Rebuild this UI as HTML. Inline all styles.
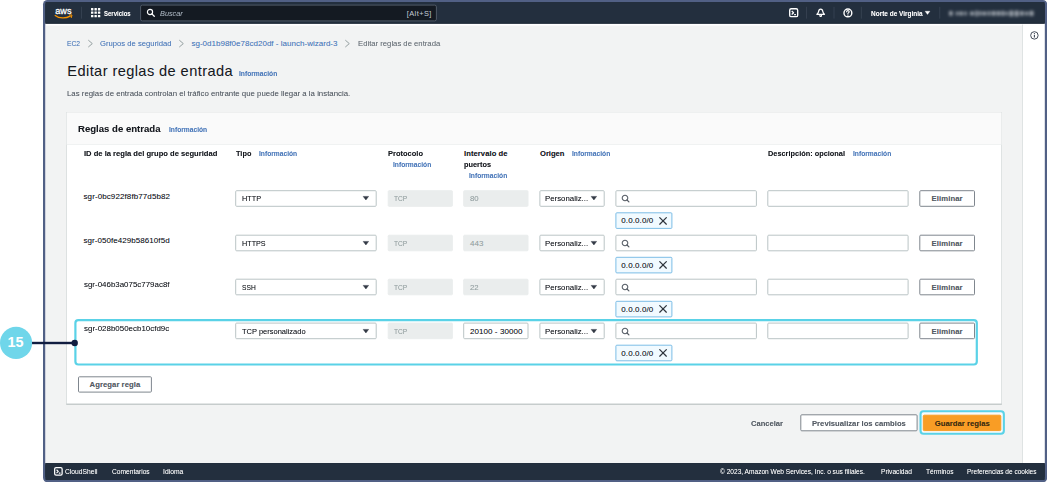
<!DOCTYPE html>
<html lang="es">
<head>
<meta charset="utf-8">
<title>Editar reglas de entrada</title>
<style>
html,body{margin:0;padding:0;background:#fff;}
body{width:1047px;height:482px;position:relative;overflow:hidden;font-family:"Liberation Sans",sans-serif;}
.t{position:absolute;white-space:nowrap;display:block;margin:0;padding:0;font-weight:400;text-decoration:none;}
svg{position:absolute;overflow:visible;}
</style>
</head>
<body>
<svg id="shapes" style="left:0;top:0" width="1047" height="482" viewBox="0 0 1047 482">
<rect x="43.00" y="0.00" width="1004.30" height="482.20" rx="4.5" fill="#516085" />
<rect x="45.30" y="22.00" width="999.50" height="443.00" rx="0" fill="#ffffff" />
<rect x="45.25" y="2.00" width="999.60" height="21.50" rx="1" fill="#232f3e" />
<rect x="45.30" y="4.00" width="999.50" height="19.50" rx="0" fill="#232f3e" />
<rect x="45.30" y="22.90" width="999.50" height="0.60" rx="0" fill="#141f2d" />
<rect x="45.90" y="25.60" width="976.50" height="437.50" rx="0" fill="#f2f3f3" />
<rect x="1022.20" y="24.50" width="0.80" height="438.60" rx="0" fill="#d9dede" />
<rect x="45.25" y="463.10" width="999.60" height="16.90" rx="1" fill="#232f3e" />
<rect x="45.30" y="463.10" width="999.50" height="13.90" rx="0" fill="#232f3e" />
<rect x="140.60" y="5.10" width="295.80" height="15.80" rx="1.75" fill="#141a22" stroke="#505a67" stroke-width="1" />
<rect x="81.20" y="6.80" width="0.80" height="11.80" rx="0" fill="#394555" />
<rect x="806.10" y="6.80" width="0.80" height="11.80" rx="0" fill="#394555" />
<rect x="833.60" y="6.80" width="0.80" height="11.80" rx="0" fill="#394555" />
<rect x="860.90" y="6.80" width="0.80" height="11.80" rx="0" fill="#394555" />
<rect x="939.40" y="6.80" width="0.80" height="11.80" rx="0" fill="#394555" />
<rect x="66.20" y="112.30" width="935.70" height="292.60" rx="0.5" fill="#c6cccc" />
<rect x="66.70" y="112.50" width="934.70" height="291.00" rx="0" fill="#ffffff" />
<rect x="66.70" y="112.70" width="934.70" height="32.00" rx="0" fill="#fafafa" />
<rect x="66.70" y="144.30" width="934.70" height="0.60" rx="0" fill="#eaeded" />
<rect x="235.70" y="190.70" width="140.50" height="15.60" rx="0.95" fill="#ffffff" stroke="#bac4c5" stroke-width="1" />
<rect x="388.20" y="190.70" width="64.20" height="15.60" rx="0.95" fill="#eaeded" stroke="#eaeded" stroke-width="1" />
<rect x="463.70" y="190.70" width="64.30" height="15.60" rx="0.95" fill="#eaeded" stroke="#eaeded" stroke-width="1" />
<rect x="539.90" y="190.70" width="64.30" height="15.60" rx="0.95" fill="#ffffff" stroke="#bac4c5" stroke-width="1" />
<rect x="615.90" y="190.70" width="140.50" height="15.60" rx="0.95" fill="#ffffff" stroke="#bac4c5" stroke-width="1" />
<rect x="767.80" y="190.70" width="140.30" height="15.60" rx="0.95" fill="#ffffff" stroke="#bac4c5" stroke-width="1" />
<rect x="919.80" y="190.70" width="54.70" height="15.60" rx="0.95" fill="#ffffff" stroke="#7f868e" stroke-width="1" />
<rect x="615.90" y="212.80" width="56.00" height="15.60" rx="0.95" fill="#f1faff" stroke="#7cbde6" stroke-width="1" />
<rect x="235.70" y="235.20" width="140.50" height="15.60" rx="0.95" fill="#ffffff" stroke="#bac4c5" stroke-width="1" />
<rect x="388.20" y="235.20" width="64.20" height="15.60" rx="0.95" fill="#eaeded" stroke="#eaeded" stroke-width="1" />
<rect x="463.70" y="235.20" width="64.30" height="15.60" rx="0.95" fill="#eaeded" stroke="#eaeded" stroke-width="1" />
<rect x="539.90" y="235.20" width="64.30" height="15.60" rx="0.95" fill="#ffffff" stroke="#bac4c5" stroke-width="1" />
<rect x="615.90" y="235.20" width="140.50" height="15.60" rx="0.95" fill="#ffffff" stroke="#bac4c5" stroke-width="1" />
<rect x="767.80" y="235.20" width="140.30" height="15.60" rx="0.95" fill="#ffffff" stroke="#bac4c5" stroke-width="1" />
<rect x="919.80" y="235.20" width="54.70" height="15.60" rx="0.95" fill="#ffffff" stroke="#7f868e" stroke-width="1" />
<rect x="615.90" y="257.30" width="56.00" height="15.60" rx="0.95" fill="#f1faff" stroke="#7cbde6" stroke-width="1" />
<rect x="235.70" y="279.20" width="140.50" height="15.60" rx="0.95" fill="#ffffff" stroke="#bac4c5" stroke-width="1" />
<rect x="388.20" y="279.20" width="64.20" height="15.60" rx="0.95" fill="#eaeded" stroke="#eaeded" stroke-width="1" />
<rect x="463.70" y="279.20" width="64.30" height="15.60" rx="0.95" fill="#eaeded" stroke="#eaeded" stroke-width="1" />
<rect x="539.90" y="279.20" width="64.30" height="15.60" rx="0.95" fill="#ffffff" stroke="#bac4c5" stroke-width="1" />
<rect x="615.90" y="279.20" width="140.50" height="15.60" rx="0.95" fill="#ffffff" stroke="#bac4c5" stroke-width="1" />
<rect x="767.80" y="279.20" width="140.30" height="15.60" rx="0.95" fill="#ffffff" stroke="#bac4c5" stroke-width="1" />
<rect x="919.80" y="279.20" width="54.70" height="15.60" rx="0.95" fill="#ffffff" stroke="#7f868e" stroke-width="1" />
<rect x="615.90" y="301.30" width="56.00" height="15.60" rx="0.95" fill="#f1faff" stroke="#7cbde6" stroke-width="1" />
<rect x="235.70" y="323.10" width="140.50" height="15.60" rx="0.95" fill="#ffffff" stroke="#bac4c5" stroke-width="1" />
<rect x="388.20" y="323.10" width="64.20" height="15.60" rx="0.95" fill="#eaeded" stroke="#eaeded" stroke-width="1" />
<rect x="463.70" y="323.10" width="64.30" height="15.60" rx="0.95" fill="#ffffff" stroke="#bac4c5" stroke-width="1" />
<rect x="539.90" y="323.10" width="64.30" height="15.60" rx="0.95" fill="#ffffff" stroke="#bac4c5" stroke-width="1" />
<rect x="615.90" y="323.10" width="140.50" height="15.60" rx="0.95" fill="#ffffff" stroke="#bac4c5" stroke-width="1" />
<rect x="767.80" y="323.10" width="140.30" height="15.60" rx="0.95" fill="#ffffff" stroke="#bac4c5" stroke-width="1" />
<rect x="919.80" y="323.10" width="54.70" height="15.60" rx="0.95" fill="#ffffff" stroke="#7f868e" stroke-width="1" />
<rect x="615.90" y="345.20" width="56.00" height="15.60" rx="0.95" fill="#f1faff" stroke="#7cbde6" stroke-width="1" />
<rect x="78.50" y="376.80" width="72.90" height="15.30" rx="0.95" fill="#ffffff" stroke="#7f868e" stroke-width="1" />
<rect x="800.80" y="414.80" width="116.30" height="16.00" rx="0.95" fill="#ffffff" stroke="#7f868e" stroke-width="1" />
<rect x="920.55" y="411.25" width="83.30" height="22.50" rx="2.975" fill="#fafbfb" stroke="#5ad2e7" stroke-width="2.1" />
<rect x="923.30" y="415.20" width="77.50" height="15.40" rx="0.95" fill="#f99d25" stroke="#f99d25" stroke-width="1" />
<rect x="75.40" y="320.10" width="901.40" height="44.40" rx="2.95" fill="none" stroke="#5ad2e7" stroke-width="2.2" />
<rect x="32.00" y="341.80" width="43.00" height="2.40" rx="0" fill="#111d40" />
<circle cx="74.7" cy="343" r="3.2" fill="#111d40"/><circle cx="16.05" cy="342.9" r="16.05" fill="#6fd6ea"/>
</svg>
<svg style="left:363.10px;top:196.45px" width="5.80" height="4.30" viewBox="0 0 6 4.2"><path d="M0.2 0.3H5.8L3 4z" fill="#323944" stroke="#323944" stroke-width="0.5" stroke-linejoin="round"/></svg>
<svg style="left:591.00px;top:196.45px" width="5.80" height="4.30" viewBox="0 0 6 4.2"><path d="M0.2 0.3H5.8L3 4z" fill="#323944" stroke="#323944" stroke-width="0.5" stroke-linejoin="round"/></svg>
<svg style="left:620.70px;top:194.10px" width="10.00" height="10.00" viewBox="0 0 10 10"><circle cx="4" cy="4" r="2.8" fill="none" stroke="#545b64" stroke-width="1.05"/><path d="M6.016 6.016L7.916 7.916" stroke="#545b64" stroke-width="1.2075" stroke-linecap="round"/></svg>
<svg style="left:659.10px;top:216.70px" width="8.10" height="7.80" viewBox="0 0 8 8"><path d="M0.6 0.6L7.4 7.4M7.4 0.6L0.6 7.4" stroke="#2f353d" stroke-width="1.25" stroke-linecap="round"/></svg>
<svg style="left:363.10px;top:240.95px" width="5.80" height="4.30" viewBox="0 0 6 4.2"><path d="M0.2 0.3H5.8L3 4z" fill="#323944" stroke="#323944" stroke-width="0.5" stroke-linejoin="round"/></svg>
<svg style="left:591.00px;top:240.95px" width="5.80" height="4.30" viewBox="0 0 6 4.2"><path d="M0.2 0.3H5.8L3 4z" fill="#323944" stroke="#323944" stroke-width="0.5" stroke-linejoin="round"/></svg>
<svg style="left:620.70px;top:238.60px" width="10.00" height="10.00" viewBox="0 0 10 10"><circle cx="4" cy="4" r="2.8" fill="none" stroke="#545b64" stroke-width="1.05"/><path d="M6.016 6.016L7.916 7.916" stroke="#545b64" stroke-width="1.2075" stroke-linecap="round"/></svg>
<svg style="left:659.10px;top:261.20px" width="8.10" height="7.80" viewBox="0 0 8 8"><path d="M0.6 0.6L7.4 7.4M7.4 0.6L0.6 7.4" stroke="#2f353d" stroke-width="1.25" stroke-linecap="round"/></svg>
<svg style="left:363.10px;top:284.95px" width="5.80" height="4.30" viewBox="0 0 6 4.2"><path d="M0.2 0.3H5.8L3 4z" fill="#323944" stroke="#323944" stroke-width="0.5" stroke-linejoin="round"/></svg>
<svg style="left:591.00px;top:284.95px" width="5.80" height="4.30" viewBox="0 0 6 4.2"><path d="M0.2 0.3H5.8L3 4z" fill="#323944" stroke="#323944" stroke-width="0.5" stroke-linejoin="round"/></svg>
<svg style="left:620.70px;top:282.60px" width="10.00" height="10.00" viewBox="0 0 10 10"><circle cx="4" cy="4" r="2.8" fill="none" stroke="#545b64" stroke-width="1.05"/><path d="M6.016 6.016L7.916 7.916" stroke="#545b64" stroke-width="1.2075" stroke-linecap="round"/></svg>
<svg style="left:659.10px;top:305.20px" width="8.10" height="7.80" viewBox="0 0 8 8"><path d="M0.6 0.6L7.4 7.4M7.4 0.6L0.6 7.4" stroke="#2f353d" stroke-width="1.25" stroke-linecap="round"/></svg>
<svg style="left:363.10px;top:328.85px" width="5.80" height="4.30" viewBox="0 0 6 4.2"><path d="M0.2 0.3H5.8L3 4z" fill="#323944" stroke="#323944" stroke-width="0.5" stroke-linejoin="round"/></svg>
<svg style="left:591.00px;top:328.85px" width="5.80" height="4.30" viewBox="0 0 6 4.2"><path d="M0.2 0.3H5.8L3 4z" fill="#323944" stroke="#323944" stroke-width="0.5" stroke-linejoin="round"/></svg>
<svg style="left:620.70px;top:326.50px" width="10.00" height="10.00" viewBox="0 0 10 10"><circle cx="4" cy="4" r="2.8" fill="none" stroke="#545b64" stroke-width="1.05"/><path d="M6.016 6.016L7.916 7.916" stroke="#545b64" stroke-width="1.2075" stroke-linecap="round"/></svg>
<svg style="left:659.10px;top:349.10px" width="8.10" height="7.80" viewBox="0 0 8 8"><path d="M0.6 0.6L7.4 7.4M7.4 0.6L0.6 7.4" stroke="#2f353d" stroke-width="1.25" stroke-linecap="round"/></svg>
<svg style="left:947px;top:0.9px;filter:blur(1.6px);opacity:.62" width="90" height="20" viewBox="0 0 90 20"><rect x="2.0" y="10.1" width="3.8" height="4.6" rx="1" fill="#dfe3e8"/><rect x="8.8" y="10.4" width="2.6" height="4.0" rx="1" fill="#dfe3e8"/><rect x="12.3" y="10.4" width="3.8" height="4.0" rx="1" fill="#dfe3e8"/><rect x="17.3" y="10.4" width="2.6" height="4.0" rx="1" fill="#dfe3e8"/><rect x="22.9" y="10.4" width="4.2" height="4.0" rx="1" fill="#dfe3e8"/><rect x="28.3" y="9.4" width="2.6" height="6.0" rx="1" fill="#dfe3e8"/><rect x="31.8" y="10.1" width="2.6" height="4.6" rx="1" fill="#dfe3e8"/><rect x="35.3" y="10.4" width="4.2" height="4.0" rx="1" fill="#dfe3e8"/><rect x="40.7" y="10.1" width="2.6" height="4.6" rx="1" fill="#dfe3e8"/><rect x="44.5" y="10.1" width="4.2" height="4.6" rx="1" fill="#dfe3e8"/><rect x="49.6" y="10.1" width="3.8" height="4.6" rx="1" fill="#dfe3e8"/><rect x="54.3" y="9.8" width="3.2" height="5.2" rx="1" fill="#dfe3e8"/><rect x="58.4" y="10.4" width="2.6" height="4.0" rx="1" fill="#dfe3e8"/><rect x="62.2" y="9.4" width="4.2" height="6.0" rx="1" fill="#dfe3e8"/><rect x="67.6" y="9.4" width="4.2" height="6.0" rx="1" fill="#dfe3e8"/><rect x="73.0" y="10.1" width="3.8" height="4.6" rx="1" fill="#dfe3e8"/><rect x="78.0" y="10.4" width="3.2" height="4.0" rx="1" fill="#dfe3e8"/><rect x="82.4" y="9.8" width="4.2" height="5.2" rx="1" fill="#dfe3e8"/></svg>
<svg style="left:54px;top:5px" width="20" height="15" viewBox="0 0 20 15"><text x="1.3" y="8.5" font-family="Liberation Sans, sans-serif" font-weight="400" font-size="9.9" fill="#ffffff" stroke="#ffffff" stroke-width="0.3" textLength="16.2" lengthAdjust="spacingAndGlyphs">aws</text><path d="M1.2 10.4C5.2 13.6 11.6 13.7 16.3 11.1" fill="none" stroke="#f79400" stroke-width="1.25" stroke-linecap="round"/><path d="M15.3 9.9L18 10L17.3 12.6" fill="none" stroke="#f79400" stroke-width="1" stroke-linejoin="round" stroke-linecap="round"/></svg>
<svg style="left:90.80px;top:8.40px" width="9.30" height="9.30" viewBox="0 0 9.3 9.3"><rect x="0" y="0" width="2.4" height="2.4" rx="0.3" fill="#ffffff"/><rect x="3.45" y="0" width="2.4" height="2.4" rx="0.3" fill="#ffffff"/><rect x="6.9" y="0" width="2.4" height="2.4" rx="0.3" fill="#ffffff"/><rect x="0" y="3.45" width="2.4" height="2.4" rx="0.3" fill="#ffffff"/><rect x="3.45" y="3.45" width="2.4" height="2.4" rx="0.3" fill="#ffffff"/><rect x="6.9" y="3.45" width="2.4" height="2.4" rx="0.3" fill="#ffffff"/><rect x="0" y="6.9" width="2.4" height="2.4" rx="0.3" fill="#ffffff"/><rect x="3.45" y="6.9" width="2.4" height="2.4" rx="0.3" fill="#ffffff"/><rect x="6.9" y="6.9" width="2.4" height="2.4" rx="0.3" fill="#ffffff"/></svg>
<svg style="left:145.90px;top:8.10px" width="10.00" height="10.00" viewBox="0 0 10 10"><circle cx="4" cy="4" r="2.6" fill="none" stroke="#ffffff" stroke-width="1.15"/><path d="M5.872 5.872L8.272 8.272" stroke="#ffffff" stroke-width="1.3225" stroke-linecap="round"/></svg>
<svg style="left:788.60px;top:8.10px" width="9.40" height="9.40" viewBox="0 0 16 16"><rect x="1.2" y="1.2" width="13.6" height="13.6" rx="2.6" fill="none" stroke="#ffffff" stroke-width="2.3"/><path d="M4.6 5L7.8 8L4.6 11M8.8 11.2H11.8" fill="none" stroke="#ffffff" stroke-width="2.1" stroke-linejoin="round"/></svg>
<svg style="left:816.00px;top:8.20px" width="9.40" height="9.40" viewBox="0 0 16 16"><path d="M8 1.9C5.6 1.9 4.7 3.8 4.4 6C4.1 8 3.2 9.5 1.6 10.7H14.4C12.8 9.5 11.9 8 11.6 6C11.3 3.8 10.4 1.9 8 1.9Z" fill="none" stroke="#fff" stroke-width="2.2" stroke-linejoin="round"/><circle cx="8" cy="13" r="1.5" fill="none" stroke="#fff" stroke-width="1.8"/></svg>
<svg style="left:842.90px;top:8.00px" width="9.80" height="9.80" viewBox="0 0 16 16"><circle cx="8" cy="8" r="6.4" fill="none" stroke="#fff" stroke-width="2.3"/><path d="M5.9 6.3C5.9 5.1 6.8 4.4 8 4.4C9.2 4.4 10.1 5.1 10.1 6.2C10.1 7.5 8 7.6 8 9.3" fill="none" stroke="#fff" stroke-width="1.9" stroke-linecap="round"/><circle cx="8" cy="11.6" r="1.15" fill="#fff"/></svg>
<svg style="left:925.20px;top:11.20px" width="5.00" height="3.60" viewBox="0 0 6 4.2"><path d="M0.2 0.3H5.8L3 4z" fill="#ffffff" stroke="#ffffff" stroke-width="0.5" stroke-linejoin="round"/></svg>
<svg style="left:1029.60px;top:31.00px" width="8.80" height="8.80" viewBox="0 0 16 16"><circle cx="8" cy="8" r="6.8" fill="none" stroke="#3a4250" stroke-width="1.7"/><path d="M8 7.2V11.6" stroke="#3a4250" stroke-width="2"/><circle cx="8" cy="4.8" r="1.1" fill="#3a4250"/></svg>
<svg style="left:87.70px;top:40.10px" width="5.00" height="7.20" viewBox="0 0 5 7.2"><path d="M0.6 0.4L4.3 3.6L0.6 6.8" fill="none" stroke="#8a9697" stroke-width="0.9" stroke-linejoin="round" stroke-linecap="round"/></svg>
<svg style="left:179.10px;top:40.10px" width="5.00" height="7.20" viewBox="0 0 5 7.2"><path d="M0.6 0.4L4.3 3.6L0.6 6.8" fill="none" stroke="#8a9697" stroke-width="0.9" stroke-linejoin="round" stroke-linecap="round"/></svg>
<svg style="left:345.20px;top:40.10px" width="5.00" height="7.20" viewBox="0 0 5 7.2"><path d="M0.6 0.4L4.3 3.6L0.6 6.8" fill="none" stroke="#8a9697" stroke-width="0.9" stroke-linejoin="round" stroke-linecap="round"/></svg>
<svg style="left:53.80px;top:467.20px" width="8.80" height="8.80" viewBox="0 0 16 16"><rect x="1.2" y="1.2" width="13.6" height="13.6" rx="2.6" fill="none" stroke="#ffffff" stroke-width="2.3"/><path d="M4.6 5L7.8 8L4.6 11M8.8 11.2H11.8" fill="none" stroke="#ffffff" stroke-width="2.1" stroke-linejoin="round"/></svg>
<span class="t" style="left:104.40px;top:8.00px;font-size:7.2px;line-height:11px;color:#ffffff;text-shadow:0 0 0.5px rgba(255,255,255,0.35);font-weight:700;transform:scaleX(0.8352);transform-origin:0 50%;">Servicios</span>
<span class="t" style="left:159.90px;top:8.00px;font-size:7.4px;line-height:11px;color:#a3adb8;text-shadow:0 0 0.5px rgba(163,173,184,0.35);font-style:italic;transform:scaleX(0.9906);transform-origin:0 50%;">Buscar</span>
<span class="t" style="left:406.80px;top:8.00px;font-size:7.4px;line-height:11px;color:#b6bec6;letter-spacing:0.419px;text-shadow:0 0 0.5px rgba(182,190,198,0.35);">[Alt+S]</span>
<span class="t" style="left:870.80px;top:8.00px;font-size:7.2px;line-height:11px;color:#ffffff;text-shadow:0 0 0.5px rgba(255,255,255,0.35);font-weight:700;transform:scaleX(0.9008);transform-origin:0 50%;">Norte de Virginia</span>
<a class="t" style="left:66.90px;top:38.00px;font-size:8px;line-height:12px;color:#4c7abb;text-shadow:0 0 0.5px rgba(76,122,187,0.35);transform:scaleX(0.8418);transform-origin:0 50%;">EC2</a>
<a class="t" style="left:100.10px;top:38.00px;font-size:8px;line-height:12px;color:#4c7abb;text-shadow:0 0 0.5px rgba(76,122,187,0.35);transform:scaleX(0.9583);transform-origin:0 50%;">Grupos de seguridad</a>
<a class="t" style="left:191.40px;top:38.00px;font-size:8px;line-height:12px;color:#4c7abb;letter-spacing:0.018px;text-shadow:0 0 0.5px rgba(76,122,187,0.35);">sg-0d1b98f0e78cd20df - launch-wizard-3</a>
<span class="t" style="left:357.90px;top:38.00px;font-size:8px;line-height:12px;color:#687078;text-shadow:0 0 0.5px rgba(104,112,120,0.35);transform:scaleX(0.9626);transform-origin:0 50%;">Editar reglas de entrada</span>
<h1 class="t" style="left:67.30px;top:61.00px;font-size:14.6px;line-height:20px;color:#16191f;letter-spacing:0.415px;text-shadow:0 0 0.5px rgba(22,25,31,0.14);">Editar reglas de entrada</h1>
<a class="t" style="left:238.70px;top:69.00px;font-size:6.9px;line-height:10px;color:#4c7abb;text-shadow:0 0 0.5px rgba(76,122,187,0.35);font-weight:700;transform:scaleX(0.9712);transform-origin:0 50%;">Información</a>
<p class="t" style="left:67.00px;top:88.00px;font-size:8px;line-height:12px;color:#545b64;text-shadow:0 0 0.5px rgba(84,91,100,0.35);transform:scaleX(0.9781);transform-origin:0 50%;">Las reglas de entrada controlan el tráfico entrante que puede llegar a la instancia.</p>
<h2 class="t" style="left:78.10px;top:122.00px;font-size:9.8px;line-height:14px;color:#16191f;text-shadow:0 0 0.5px rgba(22,25,31,0.35);font-weight:700;transform:scaleX(0.9774);transform-origin:0 50%;">Reglas de entrada</h2>
<a class="t" style="left:169.30px;top:125.00px;font-size:6.9px;line-height:10px;color:#4c7abb;text-shadow:0 0 0.5px rgba(76,122,187,0.35);font-weight:700;transform:scaleX(0.9686);transform-origin:0 50%;">Información</a>
<span class="t" style="left:83.60px;top:148.00px;font-size:7.6px;line-height:11px;color:#16191f;text-shadow:0 0 0.5px rgba(22,25,31,0.35);font-weight:700;transform:scaleX(0.9997);transform-origin:0 50%;">ID de la regla del grupo de seguridad</span>
<span class="t" style="left:235.80px;top:148.00px;font-size:7.6px;line-height:11px;color:#16191f;text-shadow:0 0 0.5px rgba(22,25,31,0.35);font-weight:700;transform:scaleX(0.9691);transform-origin:0 50%;">Tipo</span>
<a class="t" style="left:259.40px;top:149.00px;font-size:6.9px;line-height:10px;color:#4c7abb;text-shadow:0 0 0.5px rgba(76,122,187,0.35);font-weight:700;transform:scaleX(0.9686);transform-origin:0 50%;">Información</a>
<span class="t" style="left:388.00px;top:148.00px;font-size:7.6px;line-height:11px;color:#16191f;text-shadow:0 0 0.5px rgba(22,25,31,0.35);font-weight:700;transform:scaleX(0.9877);transform-origin:0 50%;">Protocolo</span>
<a class="t" style="left:393.00px;top:160.00px;font-size:6.9px;line-height:10px;color:#4c7abb;text-shadow:0 0 0.5px rgba(76,122,187,0.35);font-weight:700;transform:scaleX(0.9712);transform-origin:0 50%;">Información</a>
<span class="t" style="left:464.00px;top:148.00px;font-size:7.6px;line-height:11px;color:#16191f;letter-spacing:0.080px;text-shadow:0 0 0.5px rgba(22,25,31,0.35);font-weight:700;">Intervalo de</span>
<span class="t" style="left:464.00px;top:159.00px;font-size:7.6px;line-height:11px;color:#16191f;text-shadow:0 0 0.5px rgba(22,25,31,0.35);font-weight:700;transform:scaleX(0.9692);transform-origin:0 50%;">puertos</span>
<a class="t" style="left:469.00px;top:171.00px;font-size:6.9px;line-height:10px;color:#4c7abb;text-shadow:0 0 0.5px rgba(76,122,187,0.35);font-weight:700;transform:scaleX(0.9712);transform-origin:0 50%;">Información</a>
<span class="t" style="left:540.00px;top:148.00px;font-size:7.6px;line-height:11px;color:#16191f;letter-spacing:0.003px;text-shadow:0 0 0.5px rgba(22,25,31,0.35);font-weight:700;">Origen</span>
<a class="t" style="left:572.00px;top:149.00px;font-size:6.9px;line-height:10px;color:#4c7abb;text-shadow:0 0 0.5px rgba(76,122,187,0.35);font-weight:700;transform:scaleX(0.9712);transform-origin:0 50%;">Información</a>
<span class="t" style="left:768.00px;top:148.00px;font-size:7.6px;line-height:11px;color:#16191f;text-shadow:0 0 0.5px rgba(22,25,31,0.35);font-weight:700;transform:scaleX(0.9707);transform-origin:0 50%;">Descripción: opcional</span>
<a class="t" style="left:852.50px;top:149.00px;font-size:6.9px;line-height:10px;color:#4c7abb;text-shadow:0 0 0.5px rgba(76,122,187,0.35);font-weight:700;transform:scaleX(0.9712);transform-origin:0 50%;">Información</a>
<span class="t" style="left:83.50px;top:191.00px;font-size:8px;line-height:12px;color:#16191f;letter-spacing:0.099px;text-shadow:0 0 0.5px rgba(22,25,31,0.35);">sgr-0bc922f8fb77d5b82</span>
<span class="t" style="left:241.80px;top:193.00px;font-size:8px;line-height:12px;color:#16191f;text-shadow:0 0 0.5px rgba(22,25,31,0.35);transform:scaleX(0.9143);transform-origin:0 50%;">HTTP</span>
<span class="t" style="left:393.80px;top:193.00px;font-size:8px;line-height:12px;color:#95a1a2;text-shadow:0 0 0.5px rgba(149,161,162,0.35);transform:scaleX(0.8250);transform-origin:0 50%;">TCP</span>
<span class="t" style="left:469.90px;top:193.00px;font-size:8px;line-height:12px;color:#95a1a2;text-shadow:0 0 0.5px rgba(149,161,162,0.35);transform:scaleX(0.9768);transform-origin:0 50%;">80</span>
<span class="t" style="left:545.20px;top:193.00px;font-size:8px;line-height:12px;color:#16191f;text-shadow:0 0 0.5px rgba(22,25,31,0.35);transform:scaleX(0.9789);transform-origin:0 50%;">Personaliz...</span>
<span class="t" style="left:931.50px;top:193.00px;font-size:7.7px;line-height:11px;color:#545b64;letter-spacing:0.108px;text-shadow:0 0 0.5px rgba(84,91,100,0.35);font-weight:700;">Eliminar</span>
<span class="t" style="left:621.30px;top:215.00px;font-size:8px;line-height:12px;color:#16191f;letter-spacing:0.095px;text-shadow:0 0 0.5px rgba(22,25,31,0.35);">0.0.0.0/0</span>
<span class="t" style="left:83.50px;top:235.00px;font-size:8px;line-height:12px;color:#16191f;letter-spacing:0.057px;text-shadow:0 0 0.5px rgba(22,25,31,0.35);">sgr-050fe429b58610f5d</span>
<span class="t" style="left:241.80px;top:238.00px;font-size:8px;line-height:12px;color:#16191f;text-shadow:0 0 0.5px rgba(22,25,31,0.35);transform:scaleX(0.9034);transform-origin:0 50%;">HTTPS</span>
<span class="t" style="left:393.80px;top:238.00px;font-size:8px;line-height:12px;color:#95a1a2;text-shadow:0 0 0.5px rgba(149,161,162,0.35);transform:scaleX(0.8250);transform-origin:0 50%;">TCP</span>
<span class="t" style="left:469.90px;top:238.00px;font-size:8px;line-height:12px;color:#95a1a2;letter-spacing:0.120px;text-shadow:0 0 0.5px rgba(149,161,162,0.35);">443</span>
<span class="t" style="left:545.20px;top:238.00px;font-size:8px;line-height:12px;color:#16191f;text-shadow:0 0 0.5px rgba(22,25,31,0.35);transform:scaleX(0.9789);transform-origin:0 50%;">Personaliz...</span>
<span class="t" style="left:931.50px;top:238.00px;font-size:7.7px;line-height:11px;color:#545b64;letter-spacing:0.108px;text-shadow:0 0 0.5px rgba(84,91,100,0.35);font-weight:700;">Eliminar</span>
<span class="t" style="left:621.30px;top:260.00px;font-size:8px;line-height:12px;color:#16191f;letter-spacing:0.095px;text-shadow:0 0 0.5px rgba(22,25,31,0.35);">0.0.0.0/0</span>
<span class="t" style="left:83.50px;top:279.00px;font-size:8px;line-height:12px;color:#16191f;text-shadow:0 0 0.5px rgba(22,25,31,0.35);transform:scaleX(0.9908);transform-origin:0 50%;">sgr-046b3a075c779ac8f</span>
<span class="t" style="left:241.80px;top:282.00px;font-size:8px;line-height:12px;color:#16191f;text-shadow:0 0 0.5px rgba(22,25,31,0.35);transform:scaleX(0.8327);transform-origin:0 50%;">SSH</span>
<span class="t" style="left:393.80px;top:282.00px;font-size:8px;line-height:12px;color:#95a1a2;text-shadow:0 0 0.5px rgba(149,161,162,0.35);transform:scaleX(0.8250);transform-origin:0 50%;">TCP</span>
<span class="t" style="left:469.90px;top:282.00px;font-size:8px;line-height:12px;color:#95a1a2;text-shadow:0 0 0.5px rgba(149,161,162,0.35);transform:scaleX(0.9768);transform-origin:0 50%;">22</span>
<span class="t" style="left:545.20px;top:282.00px;font-size:8px;line-height:12px;color:#16191f;text-shadow:0 0 0.5px rgba(22,25,31,0.35);transform:scaleX(0.9789);transform-origin:0 50%;">Personaliz...</span>
<span class="t" style="left:931.50px;top:282.00px;font-size:7.7px;line-height:11px;color:#545b64;letter-spacing:0.108px;text-shadow:0 0 0.5px rgba(84,91,100,0.35);font-weight:700;">Eliminar</span>
<span class="t" style="left:621.30px;top:304.00px;font-size:8px;line-height:12px;color:#16191f;letter-spacing:0.095px;text-shadow:0 0 0.5px rgba(22,25,31,0.35);">0.0.0.0/0</span>
<span class="t" style="left:83.50px;top:323.00px;font-size:8px;line-height:12px;color:#16191f;text-shadow:0 0 0.5px rgba(22,25,31,0.35);transform:scaleX(0.9925);transform-origin:0 50%;">sgr-028b050ecb10cfd9c</span>
<span class="t" style="left:241.80px;top:326.00px;font-size:8px;line-height:12px;color:#16191f;text-shadow:0 0 0.5px rgba(22,25,31,0.35);transform:scaleX(0.9368);transform-origin:0 50%;">TCP personalizado</span>
<span class="t" style="left:393.80px;top:326.00px;font-size:8px;line-height:12px;color:#95a1a2;text-shadow:0 0 0.5px rgba(149,161,162,0.35);transform:scaleX(0.8250);transform-origin:0 50%;">TCP</span>
<span class="t" style="left:469.90px;top:326.00px;font-size:8px;line-height:12px;color:#16191f;letter-spacing:0.083px;text-shadow:0 0 0.5px rgba(22,25,31,0.35);">20100 - 30000</span>
<span class="t" style="left:545.20px;top:326.00px;font-size:8px;line-height:12px;color:#16191f;text-shadow:0 0 0.5px rgba(22,25,31,0.35);transform:scaleX(0.9789);transform-origin:0 50%;">Personaliz...</span>
<span class="t" style="left:931.50px;top:326.00px;font-size:7.7px;line-height:11px;color:#545b64;letter-spacing:0.108px;text-shadow:0 0 0.5px rgba(84,91,100,0.35);font-weight:700;">Eliminar</span>
<span class="t" style="left:621.30px;top:348.00px;font-size:8px;line-height:12px;color:#16191f;letter-spacing:0.095px;text-shadow:0 0 0.5px rgba(22,25,31,0.35);">0.0.0.0/0</span>
<span class="t" style="left:89.60px;top:379.00px;font-size:7.7px;line-height:11px;color:#545b64;letter-spacing:0.050px;text-shadow:0 0 0.5px rgba(84,91,100,0.35);font-weight:700;">Agregar regla</span>
<span class="t" style="left:751.20px;top:418.00px;font-size:7.7px;line-height:11px;color:#545b64;text-shadow:0 0 0.5px rgba(84,91,100,0.35);font-weight:700;transform:scaleX(0.9851);transform-origin:0 50%;">Cancelar</span>
<span class="t" style="left:811.90px;top:418.00px;font-size:7.7px;line-height:11px;color:#545b64;text-shadow:0 0 0.5px rgba(84,91,100,0.35);font-weight:700;transform:scaleX(0.9988);transform-origin:0 50%;">Previsualizar los cambios</span>
<span class="t" style="left:934.70px;top:418.00px;font-size:7.7px;line-height:11px;color:#3b2c10;letter-spacing:0.031px;text-shadow:0 0 0.5px rgba(59,44,16,0.35);font-weight:700;">Guardar reglas</span>
<span class="t" style="left:65.20px;top:467.00px;font-size:6.8px;line-height:10px;color:#ffffff;text-shadow:0 0 0.5px rgba(255,255,255,0.35);transform:scaleX(0.9856);transform-origin:0 50%;">CloudShell</span>
<span class="t" style="left:111.60px;top:467.00px;font-size:6.8px;line-height:10px;color:#ffffff;text-shadow:0 0 0.5px rgba(255,255,255,0.35);transform:scaleX(0.9784);transform-origin:0 50%;">Comentarios</span>
<span class="t" style="left:163.10px;top:467.00px;font-size:6.8px;line-height:10px;color:#ffffff;text-shadow:0 0 0.5px rgba(255,255,255,0.35);transform:scaleX(0.9948);transform-origin:0 50%;">Idioma</span>
<span class="t" style="left:719.80px;top:467.00px;font-size:6.8px;line-height:10px;color:#ffffff;text-shadow:0 0 0.5px rgba(255,255,255,0.35);transform:scaleX(0.9681);transform-origin:0 50%;">© 2023, Amazon Web Services, Inc. o sus filiales.</span>
<span class="t" style="left:880.90px;top:467.00px;font-size:6.8px;line-height:10px;color:#ffffff;text-shadow:0 0 0.5px rgba(255,255,255,0.35);transform:scaleX(0.9737);transform-origin:0 50%;">Privacidad</span>
<span class="t" style="left:925.50px;top:467.00px;font-size:6.8px;line-height:10px;color:#ffffff;text-shadow:0 0 0.5px rgba(255,255,255,0.35);transform:scaleX(0.9708);transform-origin:0 50%;">Términos</span>
<span class="t" style="left:967.00px;top:467.00px;font-size:6.8px;line-height:10px;color:#ffffff;text-shadow:0 0 0.5px rgba(255,255,255,0.35);transform:scaleX(0.9580);transform-origin:0 50%;">Preferencias de cookies</span>
<span class="t" style="left:7.50px;top:333.00px;font-size:14.4px;line-height:19px;color:#ffffff;text-shadow:0 0 0.5px rgba(255,255,255,0.14);font-weight:700;">15</span>
</body>
</html>
